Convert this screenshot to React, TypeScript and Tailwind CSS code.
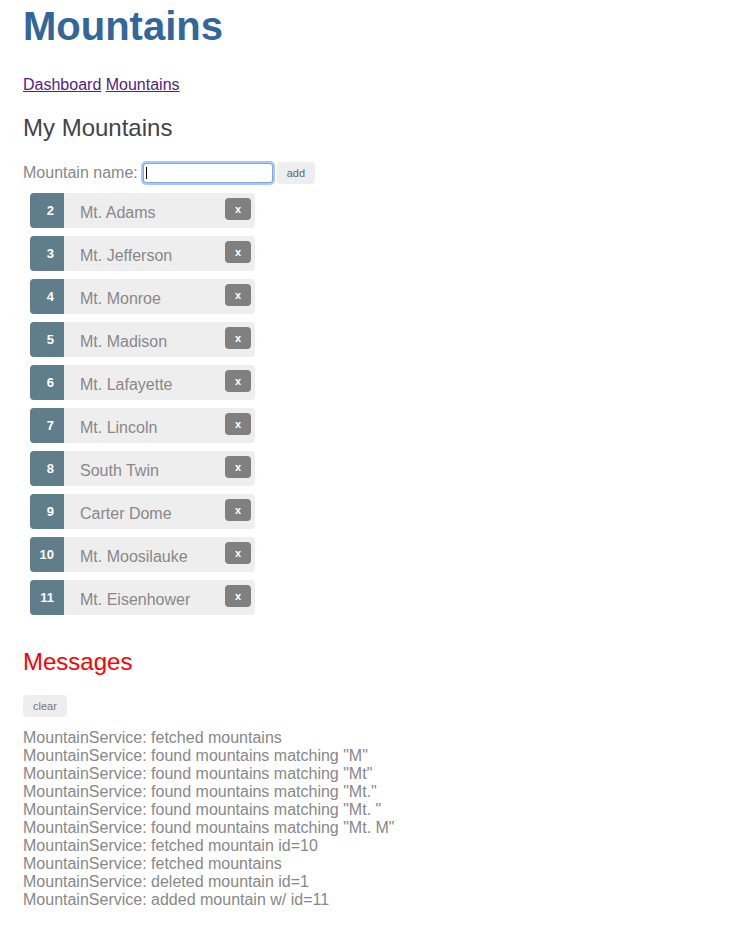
const mountains = [
  { id: 2, name: 'Mt. Adams' },
  { id: 3, name: 'Mt. Jefferson' },
  { id: 4, name: 'Mt. Monroe' },
  { id: 5, name: 'Mt. Madison' },
  { id: 6, name: 'Mt. Lafayette' },
  { id: 7, name: 'Mt. Lincoln' },
  { id: 8, name: 'South Twin' },
  { id: 9, name: 'Carter Dome' },
  { id: 10, name: 'Mt. Moosilauke' },
  { id: 11, name: 'Mt. Eisenhower' },
];

const messages = [
  'MountainService: fetched mountains',
  'MountainService: found mountains matching "M"',
  'MountainService: found mountains matching "Mt"',
  'MountainService: found mountains matching "Mt."',
  'MountainService: found mountains matching "Mt. "',
  'MountainService: found mountains matching "Mt. M"',
  'MountainService: fetched mountain id=10',
  'MountainService: fetched mountains',
  'MountainService: deleted mountain id=1',
  'MountainService: added mountain w/ id=11',
];

export default function App() {
  return (
    <div className="min-h-screen bg-white pl-[23px] pt-[3px] pb-8 font-['Liberation_Sans',Arial,sans-serif] text-[#888]">
      <h1 className="text-[40px] leading-[46px] font-bold text-[#369]">Mountains</h1>

      <nav className="mt-[27px] text-[16px] leading-[18px]">
        <a href="#" className="text-[#551a8b] underline">Dashboard</a>{' '}
        <a href="#" className="text-[#551a8b] underline">Mountains</a>
      </nav>

      <h2 className="mt-[20px] text-[24px] leading-[28px] font-light text-[#444]">My Mountains</h2>

      <div className="mt-[20px] flex h-[22px] items-center">
        <label className="text-[16px] leading-[18px]">Mountain name:</label>
        <div className="ml-[5px] flex h-[20px] w-[130px] items-center rounded-[3px] border border-[#7aa7e8] bg-white shadow-[0_0_0_2px_#a9c8f5]">
          <span className="ml-[2px] h-[12px] w-px bg-black" />
        </div>
        <button className="ml-[4px] h-[22px] rounded-[4px] bg-[#eee] px-[10px] text-[11px] text-[#666]">add</button>
      </div>

      <ul className="mt-[9px] ml-[7px] flex w-[225px] flex-col gap-[8px]">
        {mountains.map((m) => (
          <li key={m.id} className="flex h-[35px] rounded-[4px] bg-[#eee]">
            <span className="w-[34px] shrink-0 rounded-l-[4px] bg-[#607d8b] pt-[11px] pr-[10px] text-right text-[13px] leading-[13px] font-bold text-white">
              {m.id}
            </span>
            <span className="ml-[16px] pt-[11px] text-[16px] leading-[18px] text-[#888]">{m.name}</span>
            <button className="mt-[5px] mr-[4px] ml-auto h-[22px] w-[26px] rounded-[4px] bg-[#808080] text-[11px] font-bold text-white">
              x
            </button>
          </li>
        ))}
      </ul>

      <h2 className="mt-[33px] text-[24px] leading-[28px] text-[#f00]">Messages</h2>

      <button className="mt-[19px] h-[22px] rounded-[4px] bg-[#eee] px-[10px] text-[11px] text-[#777]">clear</button>

      <div className="mt-[12px] text-[16px] leading-[18px] text-[#888]">
        {messages.map((msg, i) => (
          <div key={i}>{msg}</div>
        ))}
      </div>
    </div>
  );
}
